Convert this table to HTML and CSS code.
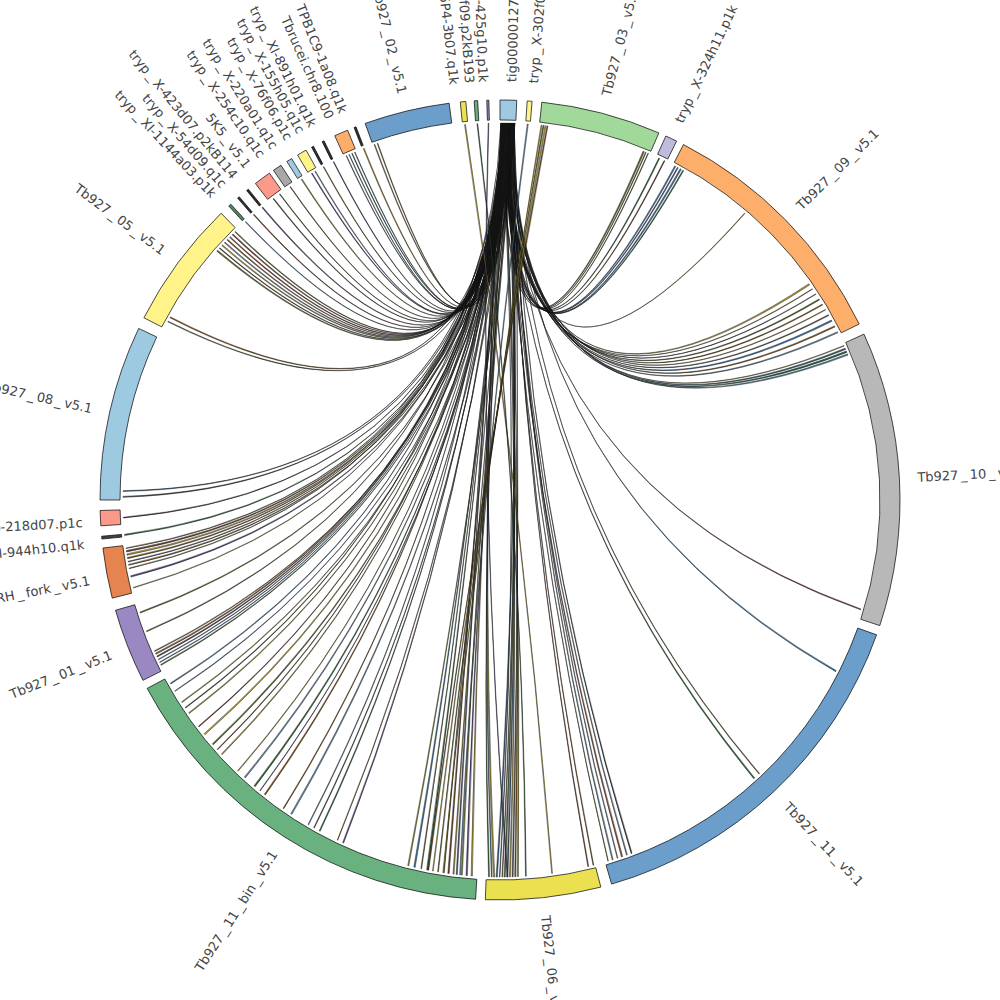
FILE: index.html
```html
<!DOCTYPE html>
<html lang="en">
<head>
<meta charset="utf-8">
<title>Circos plot</title>
<link rel="stylesheet" href="styles.css">
</head>
<body>
<div class="canvas">
<svg id="chart" class="chart" width="1000" height="1000" viewBox="0 0 1000 1000" xmlns="http://www.w3.org/2000/svg">
  <g id="links" class="links"></g>
  <g id="ideograms" class="ideograms"></g>
  <g class="labels">
    <text class="label" x="918" y="500" dy="0.35em" transform="rotate(-88.4 500 500)">tig00000127</text>
    <text class="label" x="918" y="500" dy="0.35em" transform="rotate(-85.4 500 500)">tryp<tspan dx="2.5">_</tspan><tspan dx="2.5">X-302f04.q1k</tspan></text>
    <text class="label" x="918" y="500" dy="0.35em" transform="rotate(-75.3 500 500)">Tb927<tspan dx="2.5">_</tspan><tspan dx="2.5">03</tspan><tspan dx="2.5">_</tspan><tspan dx="2.5">v5.1</tspan></text>
    <text class="label" x="918" y="500" dy="0.35em" transform="rotate(-64.7 500 500)">tryp<tspan dx="2.5">_</tspan><tspan dx="2.5">X-324h11.p1k</tspan></text>
    <text class="label" x="918" y="500" dy="0.35em" transform="rotate(-44.4 500 500)">Tb927<tspan dx="2.5">_</tspan><tspan dx="2.5">09</tspan><tspan dx="2.5">_</tspan><tspan dx="2.5">v5.1</tspan></text>
    <text class="label" x="918" y="500" dy="0.35em" transform="rotate(-3.1 500 500)">Tb927<tspan dx="2.5">_</tspan><tspan dx="2.5">10</tspan><tspan dx="2.5">_</tspan><tspan dx="2.5">v5.1</tspan></text>
    <text class="label" x="918" y="500" dy="0.35em" transform="rotate(46.75 500 500)">Tb927<tspan dx="2.5">_</tspan><tspan dx="2.5">11</tspan><tspan dx="2.5">_</tspan><tspan dx="2.5">v5.1</tspan></text>
    <text class="label" x="918" y="500" dy="0.35em" transform="rotate(83.75 500 500)">Tb927<tspan dx="2.5">_</tspan><tspan dx="2.5">06</tspan><tspan dx="2.5">_</tspan><tspan dx="2.5">v5.1</tspan></text>

    <text class="label end" x="82" y="500" dy="0.35em" transform="rotate(302.7 500 500)">Tb927<tspan dx="2.5">_</tspan><tspan dx="2.5">11</tspan><tspan dx="2.5">_</tspan><tspan dx="2.5">bin</tspan><tspan dx="2.5">_</tspan><tspan dx="2.5">v5.1</tspan></text>
    <text class="label end" x="82" y="500" dy="0.35em" transform="rotate(338.3 500 500)">Tb927<tspan dx="2.5">_</tspan><tspan dx="2.5">01</tspan><tspan dx="2.5">_</tspan><tspan dx="2.5">v5.1</tspan></text>
    <text class="label end" x="82" y="500" dy="0.35em" transform="rotate(348.9 500 500)">Tb927<tspan dx="2.5">_</tspan><tspan dx="2.5">RH</tspan><tspan dx="2.5">_</tspan><tspan dx="2.5">fork</tspan><tspan dx="2.5">_</tspan><tspan dx="2.5">v5.1</tspan></text>
    <text class="label end" x="82" y="500" dy="0.35em" transform="rotate(353.9 500 500)">tryp<tspan dx="2.5">_</tspan><tspan dx="2.5">XI-944h10.q1k</tspan></text>
    <text class="label end" x="82" y="500" dy="0.35em" transform="rotate(356.9 500 500)">tryp<tspan dx="2.5">_</tspan><tspan dx="2.5">Xb-218d07.p1c</tspan></text>
    <text class="label end" x="82" y="500" dy="0.35em" transform="rotate(12.6 500 500)">Tb927<tspan dx="2.5">_</tspan><tspan dx="2.5">08</tspan><tspan dx="2.5">_</tspan><tspan dx="2.5">v5.1</tspan></text>
    <text class="label end" x="82" y="500" dy="0.35em" transform="rotate(36.45 500 500)">Tb927<tspan dx="2.5">_</tspan><tspan dx="2.5">05</tspan><tspan dx="2.5">_</tspan><tspan dx="2.5">v5.1</tspan></text>
    <text class="label end" x="82" y="500" dy="0.35em" transform="rotate(46.8 500 500)">tryp<tspan dx="2.5">_</tspan><tspan dx="2.5">XI-1144a03.p1k</tspan></text>
    <text class="label end" x="82" y="500" dy="0.35em" transform="rotate(48.7 500 500)">tryp<tspan dx="2.5">_</tspan><tspan dx="2.5">X-54d09.q1c</tspan></text>
    <text class="label end" x="82" y="500" dy="0.35em" transform="rotate(50.6 500 500)">tryp<tspan dx="2.5">_</tspan><tspan dx="2.5">X-423d07.p2kB114</tspan></text>
    <text class="label end" x="82" y="500" dy="0.35em" transform="rotate(52.9 500 500)">5K5<tspan dx="2.5">_</tspan><tspan dx="2.5">v5.1</tspan></text>
    <text class="label end" x="82" y="500" dy="0.35em" transform="rotate(55.3 500 500)">tryp<tspan dx="2.5">_</tspan><tspan dx="2.5">X-254c10.q1c</tspan></text>
    <text class="label end" x="82" y="500" dy="0.35em" transform="rotate(57.4 500 500)">tryp<tspan dx="2.5">_</tspan><tspan dx="2.5">X-220a01.q1c</tspan></text>
    <text class="label end" x="82" y="500" dy="0.35em" transform="rotate(59.7 500 500)">tryp<tspan dx="2.5">_</tspan><tspan dx="2.5">X-76f06.p1c</tspan></text>
    <text class="label end" x="82" y="500" dy="0.35em" transform="rotate(61.6 500 500)">tryp<tspan dx="2.5">_</tspan><tspan dx="2.5">X-155h05.q1c</tspan></text>
    <text class="label end" x="82" y="500" dy="0.35em" transform="rotate(63.4 500 500)">tryp<tspan dx="2.5">_</tspan><tspan dx="2.5">XI-891h01.q1k</tspan></text>
    <text class="label end" x="82" y="500" dy="0.35em" transform="rotate(66.0 500 500)">Tbrucei.chr8.100</text>
    <text class="label end" x="82" y="500" dy="0.35em" transform="rotate(68.0 500 500)">TPB1C9-1a08.q1k</text>
    <text class="label end" x="82" y="500" dy="0.35em" transform="rotate(76.5 500 500)">Tb927<tspan dx="2.5">_</tspan><tspan dx="2.5">02</tspan><tspan dx="2.5">_</tspan><tspan dx="2.5">v5.1</tspan></text>
    <text class="label end" x="82" y="500" dy="0.35em" transform="rotate(83.7 500 500)">TPB5P4-3b07.q1k</text>
    <text class="label end" x="82" y="500" dy="0.35em" transform="rotate(85.85 500 500)">tryp<tspan dx="2.5">_</tspan><tspan dx="2.5">X-10f09.p2kB193</tspan></text>
    <text class="label end" x="82" y="500" dy="0.35em" transform="rotate(87.7 500 500)">tryp<tspan dx="2.5">_</tspan><tspan dx="2.5">XI-425g10.p1k</tspan></text>
  </g>
</svg>
</div>
<script src="script.js"></script>
</body>
</html>
```

FILE: styles.css
```css
html, body {
  margin: 0;
  padding: 0;
  background: #ffffff;
}

.canvas {
  width: 1000px;
  height: 1000px;
  overflow: hidden;
}

.chart {
  display: block;
}

.label {
  font-family: "DejaVu Sans", Verdana, sans-serif;
  font-size: 13px;
  fill: #444444;
}

.label.end {
  text-anchor: end;
}

.ideo {
  stroke: #000000;
  stroke-width: 0.7;
  stroke-linejoin: miter;
}

.link {
  stroke: #111111;
  stroke-width: 0.45;
}
```

FILE: script.js
```js
(function () {
  var NS = "http://www.w3.org/2000/svg";
  var CX = 500, CY = 500, R0 = 380, R1 = 400, RL = 377, BR = 22;

  function pt(a, r) {
    var t = a * Math.PI / 180;
    return [CX + r * Math.sin(t), CY - r * Math.cos(t)];
  }
  function f(p) { return p[0].toFixed(2) + "," + p[1].toFixed(2); }

  var segs = [
    [340.3, 352.7, "#6b9ecb"],
    [354.3, 355.1, "#ebe050"],
    [356.3, 356.8, "#66b07f"],
    [358.1, 358.4, "#9a88c2"],
    [0.0, 2.4, "#9ecae1"],
    [3.9, 4.6, "#fff38a"],
    [6.0, 23.4, "#a1d99b"],
    [24.5, 26.2, "#bcbddc"],
    [27.3, 63.9, "#fdae6b"],
    [65.5, 108.3, "#b8b8b8"],
    [109.7, 163.8, "#6b9ecb"],
    [165.4, 182.1, "#ebe050"],
    [183.5, 241.9, "#69b27f"],
    [243.2, 254.0, "#9a88c2"],
    [255.8, 263.1, "#e6844f"],
    [264.4, 264.8, "#444444"],
    [266.3, 268.5, "#fb9a88"],
    [270.0, 295.4, "#9ecae1"],
    [297.1, 315.8, "#fff38a"],
    [317.3, 317.7, "#4f8a58"],
    [319.0, 319.3, "#333333"],
    [320.7, 321.0, "#3a2a20"],
    [322.3, 324.8, "#fb9a88"],
    [325.5, 326.8, "#a8a8a8"],
    [327.8, 328.6, "#9ecae1"],
    [329.6, 331.0, "#fff38a"],
    [331.9, 332.2, "#333333"],
    [333.6, 333.9, "#333333"],
    [335.6, 337.6, "#fdae6b"],
    [338.6, 338.9, "#333333"]
  ];

  var gI = document.getElementById("ideograms");
  segs.forEach(function (s) {
    var a = s[0], b = s[1];
    var large = (b - a) > 180 ? 1 : 0;
    var p1 = pt(a, R1), p2 = pt(b, R1), p3 = pt(b, R0), p4 = pt(a, R0);
    var d = "M" + f(p1) + "A" + R1 + "," + R1 + " 0 " + large + " 1 " + f(p2) +
            "L" + f(p3) + "A" + R0 + "," + R0 + " 0 " + large + " 0 " + f(p4) + "Z";
    var el = document.createElementNS(NS, "path");
    el.setAttribute("d", d);
    el.setAttribute("fill", s[2]);
    el.setAttribute("class", "ideo");
    gI.appendChild(el);
  });

  var seed = 20240611;
  function rnd() {
    seed = (seed * 1103515245 + 12345) % 2147483648;
    return seed / 2147483648;
  }

  var pal = ["#8c510a", "#6b6b2a", "#35608a", "#2e6b3a", "#5b4a8a", "#7a3b2e",
             "#9a9a3a", "#4a4a4a", "#a0522d", "#3b7bb0", "#556b2f", "#2f2f2f",
             "#b8a038", "#6a8fb0"];

  var groups = [
    [22.3, 23.1, 3], [24.9, 25.8, 2], [27.6, 29.0, 4], [40.3, 40.6, 1],
    [55.0, 61.5, 8], [62.5, 63.5, 2], [65.8, 67.2, 4], [106.6, 107.0, 1],
    [116.7, 117.1, 1], [136.5, 137.5, 2], [159.5, 163.3, 6], [165.6, 166.4, 2],
    [177.2, 181.6, 12], [184.2, 186.5, 4], [187.0, 188.5, 3], [191.0, 194.0, 4],
    [204.5, 205.5, 2], [208.5, 210.5, 3], [213.5, 215.0, 2], [218.5, 220.5, 3],
    [222.5, 224.0, 2], [227.5, 229.5, 3], [231.5, 233.0, 2], [235.5, 237.5, 3],
    [239.5, 240.8, 2], [244.0, 246.3, 6], [249.3, 249.8, 1], [252.3, 252.8, 1],
    [256.3, 256.7, 1], [258.0, 258.4, 1], [259.5, 262.6, 7], [264.45, 264.75, 1],
    [267.0, 267.5, 1], [270.4, 271.3, 2], [298.2, 298.9, 2], [311.3, 315.3, 8],
    [317.4, 317.6, 1], [319.05, 319.25, 1], [320.75, 320.95, 1], [323.0, 324.2, 2],
    [325.9, 326.4, 1], [328.0, 328.4, 1], [330.0, 330.6, 2], [331.95, 332.15, 1],
    [333.65, 333.85, 1], [335.9, 337.3, 4], [338.65, 338.85, 1], [340.5, 341.0, 2]
  ];

  var far = [];
  groups.forEach(function (g) {
    for (var i = 0; i < g[2]; i++) {
      var t = g[2] === 1 ? 0.5 : i / (g[2] - 1);
      far.push(g[0] + (g[1] - g[0]) * t);
    }
  });

  var n = far.length, slots = [];
  for (var i = 0; i < n; i++) slots.push(0.12 + 2.14 * (i + 0.5) / n);
  for (var k = n - 1; k > 0; k--) {
    var j = Math.floor(rnd() * (k + 1));
    var tmp = slots[k]; slots[k] = slots[j]; slots[j] = tmp;
  }

  var links = [];
  far.forEach(function (b, idx) {
    var w = b > 316 && b < 341.5 ? 0.06 + rnd() * 0.08 : 0.07 + rnd() * 0.15;
    links.push([slots[idx], 0.012, b, w, pal[Math.floor(rnd() * pal.length)]]);
  });

  links.push([354.6, 0.15, 172.0, 0.12, "#c8b830"]);
  links.push([356.5, 0.12, 176.0, 0.12, "#2e6b3a"]);
  links.push([358.2, 0.1, 178.8, 0.1, "#5b4a8a"]);
  links.push([4.15, 0.15, 186.0, 0.15, "#6a9fc8"]);
  links.push([6.25, 0.15, 188.6, 0.12, "#c8b830"]);
  links.push([6.55, 0.15, 189.4, 0.12, "#6b6b2a"]);
  links.push([6.85, 0.15, 190.2, 0.12, "#d8c840"]);
  links.push([7.15, 0.15, 190.9, 0.12, "#8c510a"]);

  function ctrl(a, b) {
    var d = ((b - a) % 360 + 360) % 360;
    var m = d <= 180 ? a + d / 2 : a - (360 - d) / 2;
    return pt(m, BR);
  }

  var gL = document.getElementById("links");
  links.forEach(function (L) {
    var A = L[0], wA = L[1], B = L[2], wB = L[3];
    var a1 = pt(A, RL), a2 = pt(A + wA, RL), b1 = pt(B, RL), b2 = pt(B + wB, RL);
    var c = ctrl(A, B);
    var d = "M" + f(a1) + "Q" + f(c) + " " + f(b2) + "L" + f(b1) +
            "Q" + f(c) + " " + f(a2) + "Z";
    var el = document.createElementNS(NS, "path");
    el.setAttribute("d", d);
    el.setAttribute("fill", L[4]);
    el.setAttribute("class", "link");
    gL.appendChild(el);
  });
})();
```
